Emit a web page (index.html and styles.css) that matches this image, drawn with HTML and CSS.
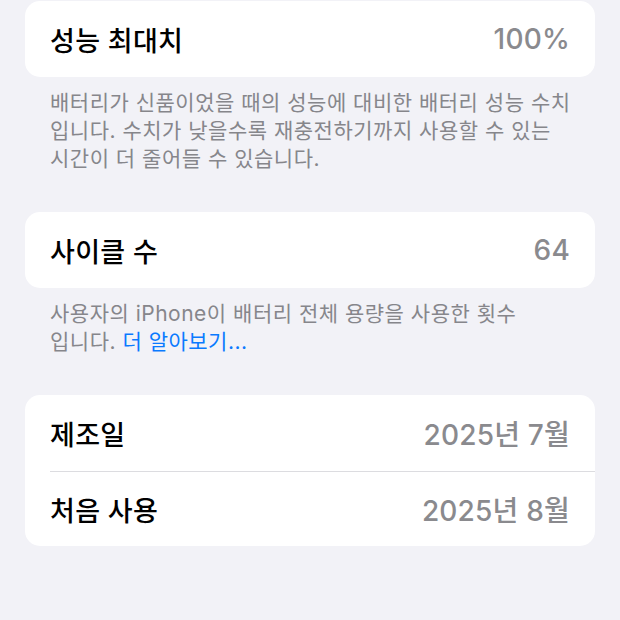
FILE: index.html
```html
<!DOCTYPE html>
<html lang="ko">
<head>
    <meta charset="UTF-8">
    <meta name="viewport" content="width=device-width, initial-scale=1.0">
    <title>배터리 상태</title>
    <link rel="stylesheet" href="styles.css">
</head>
<body>

    <div class="page">
        <section class="group">
            <div class="card">
                <div class="row">
                    <span class="label">성능 최대치</span>
                    <span class="value">100%</span>
                </div>
            </div>
            <p class="note">배터리가 신품이었을 때의 성능에 대비한 배터리 성능 수치<br>입니다. 수치가 낮을수록 재충전하기까지 사용할 수 있는<br>시간이 더 줄어들 수 있습니다.</p>
        </section>

        <section class="group">
            <div class="card">
                <div class="row">
                    <span class="label">사이클 수</span>
                    <span class="value">64</span>
                </div>
            </div>
            <p class="note">사용자의 iPhone이 배터리 전체 용량을 사용한 횟수<br>입니다. <a href="#" class="link">더 알아보기...</a></p>
        </section>

        <section class="group">
            <div class="card">
                <div class="row">
                    <span class="label">제조일</span>
                    <span class="value">2025년 7월</span>
                </div>
                <div class="row">
                    <span class="label">처음 사용</span>
                    <span class="value">2025년 8월</span>
                </div>
            </div>
        </section>
    </div>

</body>
</html>
```

FILE: styles.css
```css
* { margin: 0; padding: 0; box-sizing: border-box; }
body { background: #f2f2f7; color: #000; font-family: "Inter", "Noto Sans CJK KR", sans-serif; }

.page { padding: 1px 25px 0; display: flex; flex-direction: column; gap: 39px; }

.card { background: #fff; border-radius: 15px; overflow: hidden; }
.row { height: 76px; display: flex; align-items: center; justify-content: space-between; padding: 0 25px 0 25px; }
.row + .row { border-top: 1px solid #dcdce0; margin-left: 25px; padding-left: 0; height: 75px; }

.label { font-size: 27px; font-weight: 500; letter-spacing: 0.3px; }
.value { font-size: 28px; font-weight: 500; color: #8a8a8e; letter-spacing: 0.2px; }

.note { margin-top: 12px; padding-left: 25px; font-size: 21px; line-height: 28px; color: #86868b; letter-spacing: 0.5px; }
.link { color: #0a7aff; text-decoration: none; }
```
